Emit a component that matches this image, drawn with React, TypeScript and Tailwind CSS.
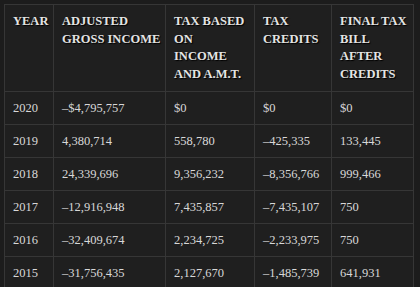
import React from "react";

const rows = [
  ["2020", "\u2013$4,795,757", "$0", "$0", "$0"],
  ["2019", "4,380,714", "558,780", "\u2013425,335", "133,445"],
  ["2018", "24,339,696", "9,356,232", "\u20138,356,766", "999,466"],
  ["2017", "\u201312,916,948", "7,435,857", "\u20137,435,107", "750"],
  ["2016", "\u201332,409,674", "2,234,725", "\u20132,233,975", "750"],
  ["2015", "\u201331,756,435", "2,127,670", "\u20131,485,739", "641,931"],
];

const headers = [
  ["YEAR"],
  ["ADJUSTED", "GROSS INCOME"],
  ["TAX BASED", "ON", "INCOME", "AND A.M.T."],
  ["TAX", "CREDITS"],
  ["FINAL TAX", "BILL", "AFTER", "CREDITS"],
];

const widths = ["w-[49px]", "w-[112px]", "w-[89px]", "w-[77px]", "w-[82px]"];

export default function App() {
  return (
    <div
      className="w-[420px] h-[287px] bg-[#1c1c1c] pt-[4px] pl-[4px]"
      style={{ fontFamily: '"Liberation Serif", "Times New Roman", serif' }}
    >
      <table className="border-collapse table-fixed w-[409px] bg-[#1f1f1f]">
        <thead>
          <tr>
            {headers.map((h, i) => (
              <th
                key={i}
                className={`${widths[i]} border border-[#363636] pl-[8px] pr-0 py-[8px] text-left align-top font-bold text-[12.5px] leading-[17.5px] text-[#e4e4e4] [text-shadow:1px_1px_1px_#000] whitespace-nowrap`}
              >
                {h.map((line, li) => (
                  <div key={li}>{line}</div>
                ))}
              </th>
            ))}
          </tr>
        </thead>
        <tbody>
          {rows.map((r, ri) => (
            <tr key={ri}>
              {r.map((c, ci) => (
                <td
                  key={ci}
                  className="border border-[#363636] pl-[8px] pr-0 py-[8px] text-left text-[12.5px] leading-[16px] h-[33px] text-[#d8d8d8] whitespace-nowrap"
                >
                  {c}
                </td>
              ))}
            </tr>
          ))}
        </tbody>
      </table>
    </div>
  );
}
